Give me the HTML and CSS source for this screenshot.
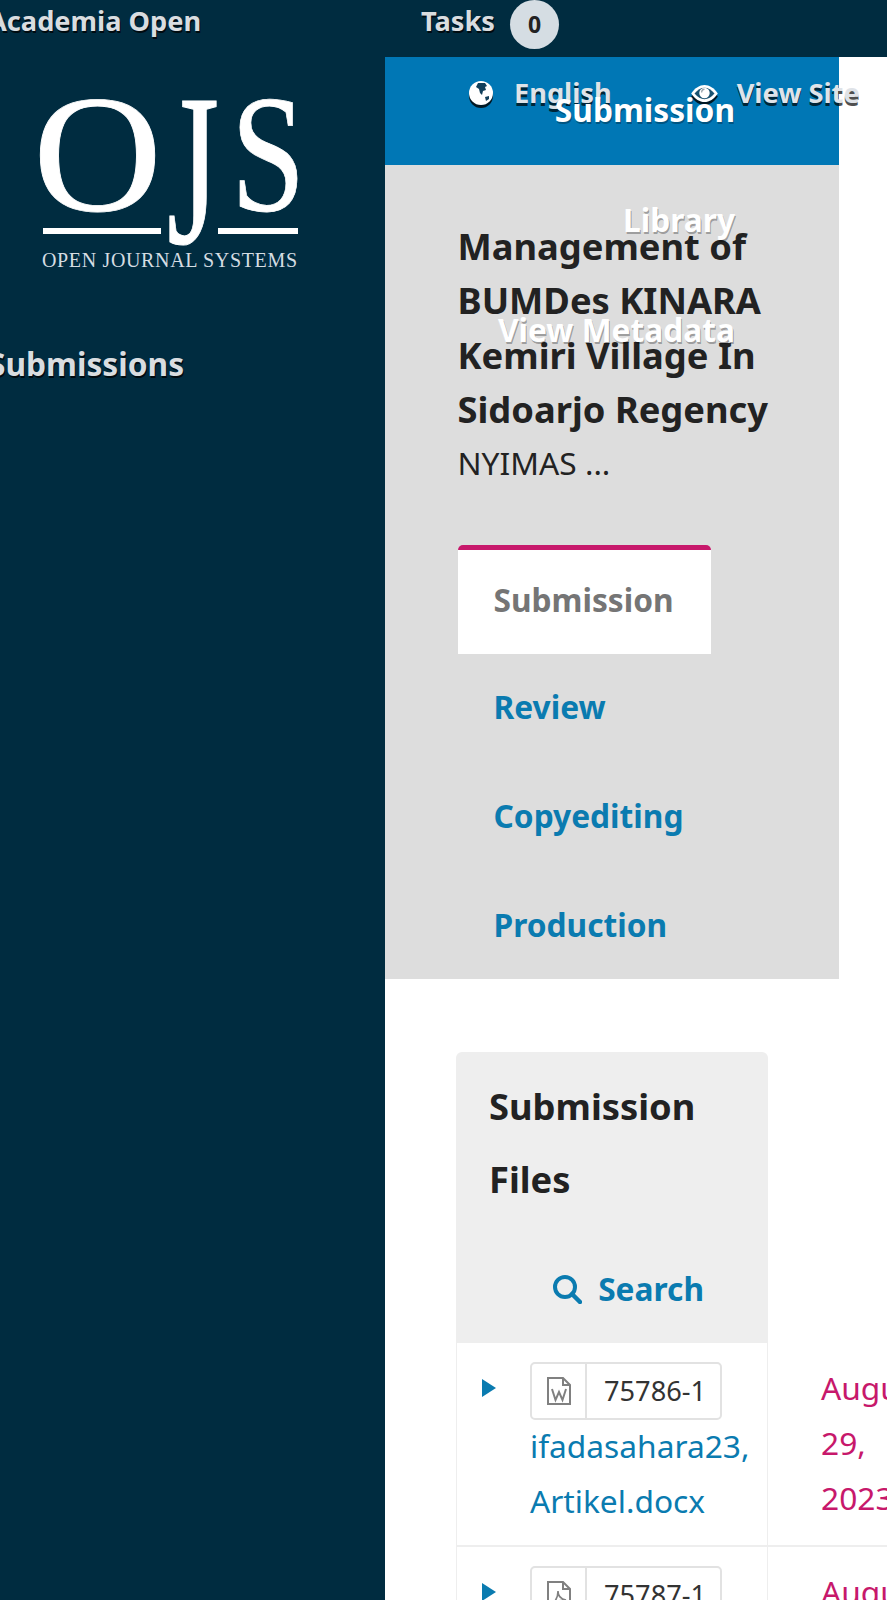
FILE: index.html
```html
<!DOCTYPE html>
<html lang="en">
<head>
<meta charset="utf-8">
<title>Submission</title>
<link rel="stylesheet" href="styles.css">
</head>
<body>
<div class="page">
  <header class="topbar">
    <a class="journal">Academia Open</a>
    <div class="tasks"><span class="tasks-label">Tasks</span><span class="tasks-count">0</span></div>
  </header>
  <div class="layout">
    <aside class="sidebar">
      <svg class="logo" viewBox="0 0 262 176" aria-label="Open Journal Systems">
        <text class="logo-big" transform="translate(-5 113) scale(1.07 1)">O</text>
        <text class="logo-big" transform="translate(129 146) scale(.8 1.3)">J</text>
        <text class="logo-big" transform="translate(193 113) scale(.8 1)">S</text>
        <rect class="logo-bar" x="5" y="131" width="118" height="6"></rect>
        <rect class="logo-bar" x="180" y="131" width="80" height="6"></rect>
        <text class="logo-small" x="4" y="170" textLength="255">OPEN JOURNAL SYSTEMS</text>
      </svg>
      <a class="side-link">Submissions</a>
    </aside>
    <main class="main">
      <div class="workspace">
        <div class="blue-bar"></div>
        <section class="summary">
          <h1 class="title">Management of BUMDes KINARA Kemiri Village In Sidoarjo Regency</h1>
          <p class="authors">NYIMAS ...</p>
          <ul class="tabs">
            <li class="tab tab-active">Submission</li>
            <li class="tab">Review</li>
            <li class="tab">Copyediting</li>
            <li class="tab">Production</li>
          </ul>
        </section>
        <nav class="user-nav">
          <a class="user-link"><svg class="user-icon" viewBox="0 0 24 24"><circle cx="12" cy="12" r="12" fill="#fff"></circle><path d="M9 2l7 0 2 3-2 1 1 3-3 1-1 4-2-2-1-4-3-2 1-2zM16 16l4-1 0 3-3 2z" fill="#12405c"></path></svg>English</a>
          <a class="user-link user-site"><svg class="user-icon eye" viewBox="0 0 30 20"><path d="M1 10C5 4 10 1 15 1s10 3 14 9c-4 6-9 9-14 9S5 16 1 10z" fill="#fff"></path><path d="M4.500 10C8 6 11 4 15 4s7 2 10.500 6C22 14 19 16 15 16s-7-2-10.500-6z" fill="#1a5270"></path><circle cx="15" cy="9.500" r="5.500" fill="#fff"></circle><path d="M12 9c0-2 1-3.500 3-3.500" fill="none" stroke="#9aa5ad" stroke-width="1.400"></path></svg>View Site</a>
        </nav>
        <div class="actions">
          <a class="action">Submission</a>
          <a class="action">Library</a>
          <a class="action">View Metadata</a>
        </div>
      </div>
      <section class="files">
        <div class="files-head">
          <h2 class="files-title">Submission Files</h2>
          <a class="files-search"><svg class="search-icon" viewBox="0 0 30 30"><circle cx="13" cy="13" r="10" fill="none" stroke="currentColor" stroke-width="4"></circle><path d="M20 20l8 8" stroke="currentColor" stroke-width="4.5" stroke-linecap="round"></path></svg>Search</a>
        </div>
        <div class="file-row">
          <div class="file-cell">
            <span class="arrow"></span>
            <div class="file-main">
              <span class="badge"><span class="badge-icon"><svg class="doc-icon" viewBox="0 0 24 28"><path d="M1 1h15l7 7v19H1z M16 1v7h7" fill="none" stroke="#808080" stroke-width="2"></path><path d="M5 12l3.500 11 3.500-8 3.500 8 3.500-11" fill="none" stroke="#808080" stroke-width="2"></path></svg></span><span class="badge-id">75786-1</span></span>
              <a class="file-name">ifadasahara23, Artikel.docx</a>
            </div>
          </div>
          <div class="date-cell">August 29, 2023</div>
        </div>
        <div class="file-row">
          <div class="file-cell">
            <span class="arrow"></span>
            <div class="file-main">
              <span class="badge"><span class="badge-icon"><svg class="doc-icon" viewBox="0 0 24 28"><path d="M1 1h15l7 7v19H1z M16 1v7h7" fill="none" stroke="#808080" stroke-width="2"></path><path d="M5 23c4-3 6-8 6-13 0 5 3 8 8 9-5 0-10 1-14 4z" fill="none" stroke="#808080" stroke-width="1.600"></path></svg></span><span class="badge-id">75787-1</span></span>
            </div>
          </div>
          <div class="date-cell">August 29, 2023</div>
        </div>
      </section>
    </main>
  </div>
</div>
</body>
</html>
```

FILE: styles.css
```css
* { box-sizing: border-box; }
html, body { margin: 0; padding: 0; background: #fff; }
body { font-family: "Noto Sans", sans-serif; color: #222; }
.page { width: 887px; height: 1600px; overflow: hidden; position: relative; }

.topbar { height: 57px; background: #002c40; display: flex; align-items: flex-start; }
.journal { width: 433px; margin-left: -12px; flex: none; font-size: 27.2px; font-weight: 700; line-height: 42px; color: #d9dde0; text-shadow: 1px 2px 0 rgba(0,0,0,.75); white-space: nowrap; }
.tasks { display: flex; align-items: flex-start; }
.tasks-label { font-size: 27.2px; font-weight: 700; line-height: 42px; color: #d9dde0; text-shadow: 1px 2px 0 rgba(0,0,0,.75); }
.tasks-count { width: 49px; height: 49px; margin-left: 15px; border-radius: 50%; background: #d5dde3; color: #222; font-size: 23px; font-weight: 700; line-height: 49px; text-align: center; }

.layout { display: flex; height: 1543px; }
.sidebar { width: 385px; flex: none; background: #002c40; padding: 40px 0 0 38px; }
.logo { display: block; width: 262px; height: 176px; overflow: visible; }
.logo-big { font-family: "Liberation Serif", serif; font-size: 167px; fill: #fff; stroke: #fff; stroke-width: .8px; }
.logo-bar { fill: #fff; }
.logo-small { font-family: "Liberation Serif", serif; font-size: 20px; fill: #d5dde3; }
.side-link { display: block; margin: 69px 0 0 -50px; font-size: 31.7px; font-weight: 700; line-height: 44px; color: #d9dde0; text-shadow: 1px 2px 0 rgba(0,0,0,.75); white-space: nowrap; }

.main { flex: 1; min-width: 0; }
.workspace { position: relative; width: 454px; }
.blue-bar { height: 108px; background: #0077b5; }
.summary { background: #ddd; padding: 54px 0 0 72.5px; height: 814px; }
.title { margin: 0; width: 330px; font-size: 36.3px; font-weight: 700; line-height: 54.3px; color: #222; }
.authors { margin: 0; font-size: 31.7px; line-height: 54px; color: #222; }
.tabs { list-style: none; margin: 55px 0 0; padding: 0; }
.tab { width: 253px; height: 109px; padding: 0 36px; font-size: 31.7px; font-weight: 700; line-height: 105px; color: #0a7bb0; }
.tab-active { background: #fff; color: #757575; border-top: 5px solid #c7186b; border-radius: 5px 5px 0 0; line-height: 100px; }

.user-nav { position: absolute; left: 84px; top: 16px; display: flex; gap: 78px; white-space: nowrap; }
.user-link { display: flex; align-items: center; font-size: 27.2px; font-weight: 700; line-height: 40px; color: #dfe3e8; text-shadow: 0 3px 0 rgba(0,0,0,.7); }
.user-icon { width: 24px; height: 24px; margin-right: 21px; filter: drop-shadow(0 3px 0 rgba(0,0,0,.8)); }
.eye { width: 29px; height: 19px; margin-right: 18px; }

.actions { position: absolute; right: 104px; top: 31px; display: flex; flex-direction: column; gap: 66px; align-items: flex-end; white-space: nowrap; }
.action { font-size: 31.7px; font-weight: 700; line-height: 44px; color: #fff; text-shadow: 1px 2px 0 rgba(0,0,0,.3); }

.files { margin: 73px 0 0 71px; width: 600px; }
.files-head { width: 312px; height: 291px; background: #eee; border-radius: 6px 6px 0 0; padding: 18px 33px 0; }
.files-title { margin: 0; font-size: 36.3px; font-weight: 700; line-height: 72.5px; color: #222; }
.files-search { display: flex; align-items: center; justify-content: flex-end; margin: 52px 31px 0 0; font-size: 31.7px; font-weight: 700; line-height: 44px; color: #0a7bb0; white-space: nowrap; }
.search-icon { width: 30px; height: 30px; margin-right: 16px; }

.file-row { display: flex; border-bottom: 2px solid #eee; min-height: 204px; }
.file-cell { width: 312px; flex: none; display: flex; border-left: 1px solid #eee; border-right: 1px solid #eee; padding: 19px 0 0 25px; }
.arrow { width: 0; height: 0; margin-top: 17px; border-left: 14px solid #0a7bb0; border-top: 9px solid transparent; border-bottom: 9px solid transparent; }
.file-main { margin-left: 34px; width: 240px; }
.badge { display: flex; width: 192px; height: 58px; border: 2px solid #e2e2e2; border-radius: 5px; }
.badge-icon { width: 55px; flex: none; display: flex; align-items: center; justify-content: center; border-right: 2px solid #e2e2e2; }
.doc-icon { width: 24px; height: 28px; }
.badge-id { padding-left: 17px; font-size: 27.2px; line-height: 54px; color: #333; }
.file-name { display: block; margin-top: -2px; font-size: 31.7px; line-height: 55px; color: #0a7bb0; }
.date-cell { padding: 17px 0 0 53px; width: 150px; flex: none; font-size: 31.7px; line-height: 55px; color: #c7186b; }
```
